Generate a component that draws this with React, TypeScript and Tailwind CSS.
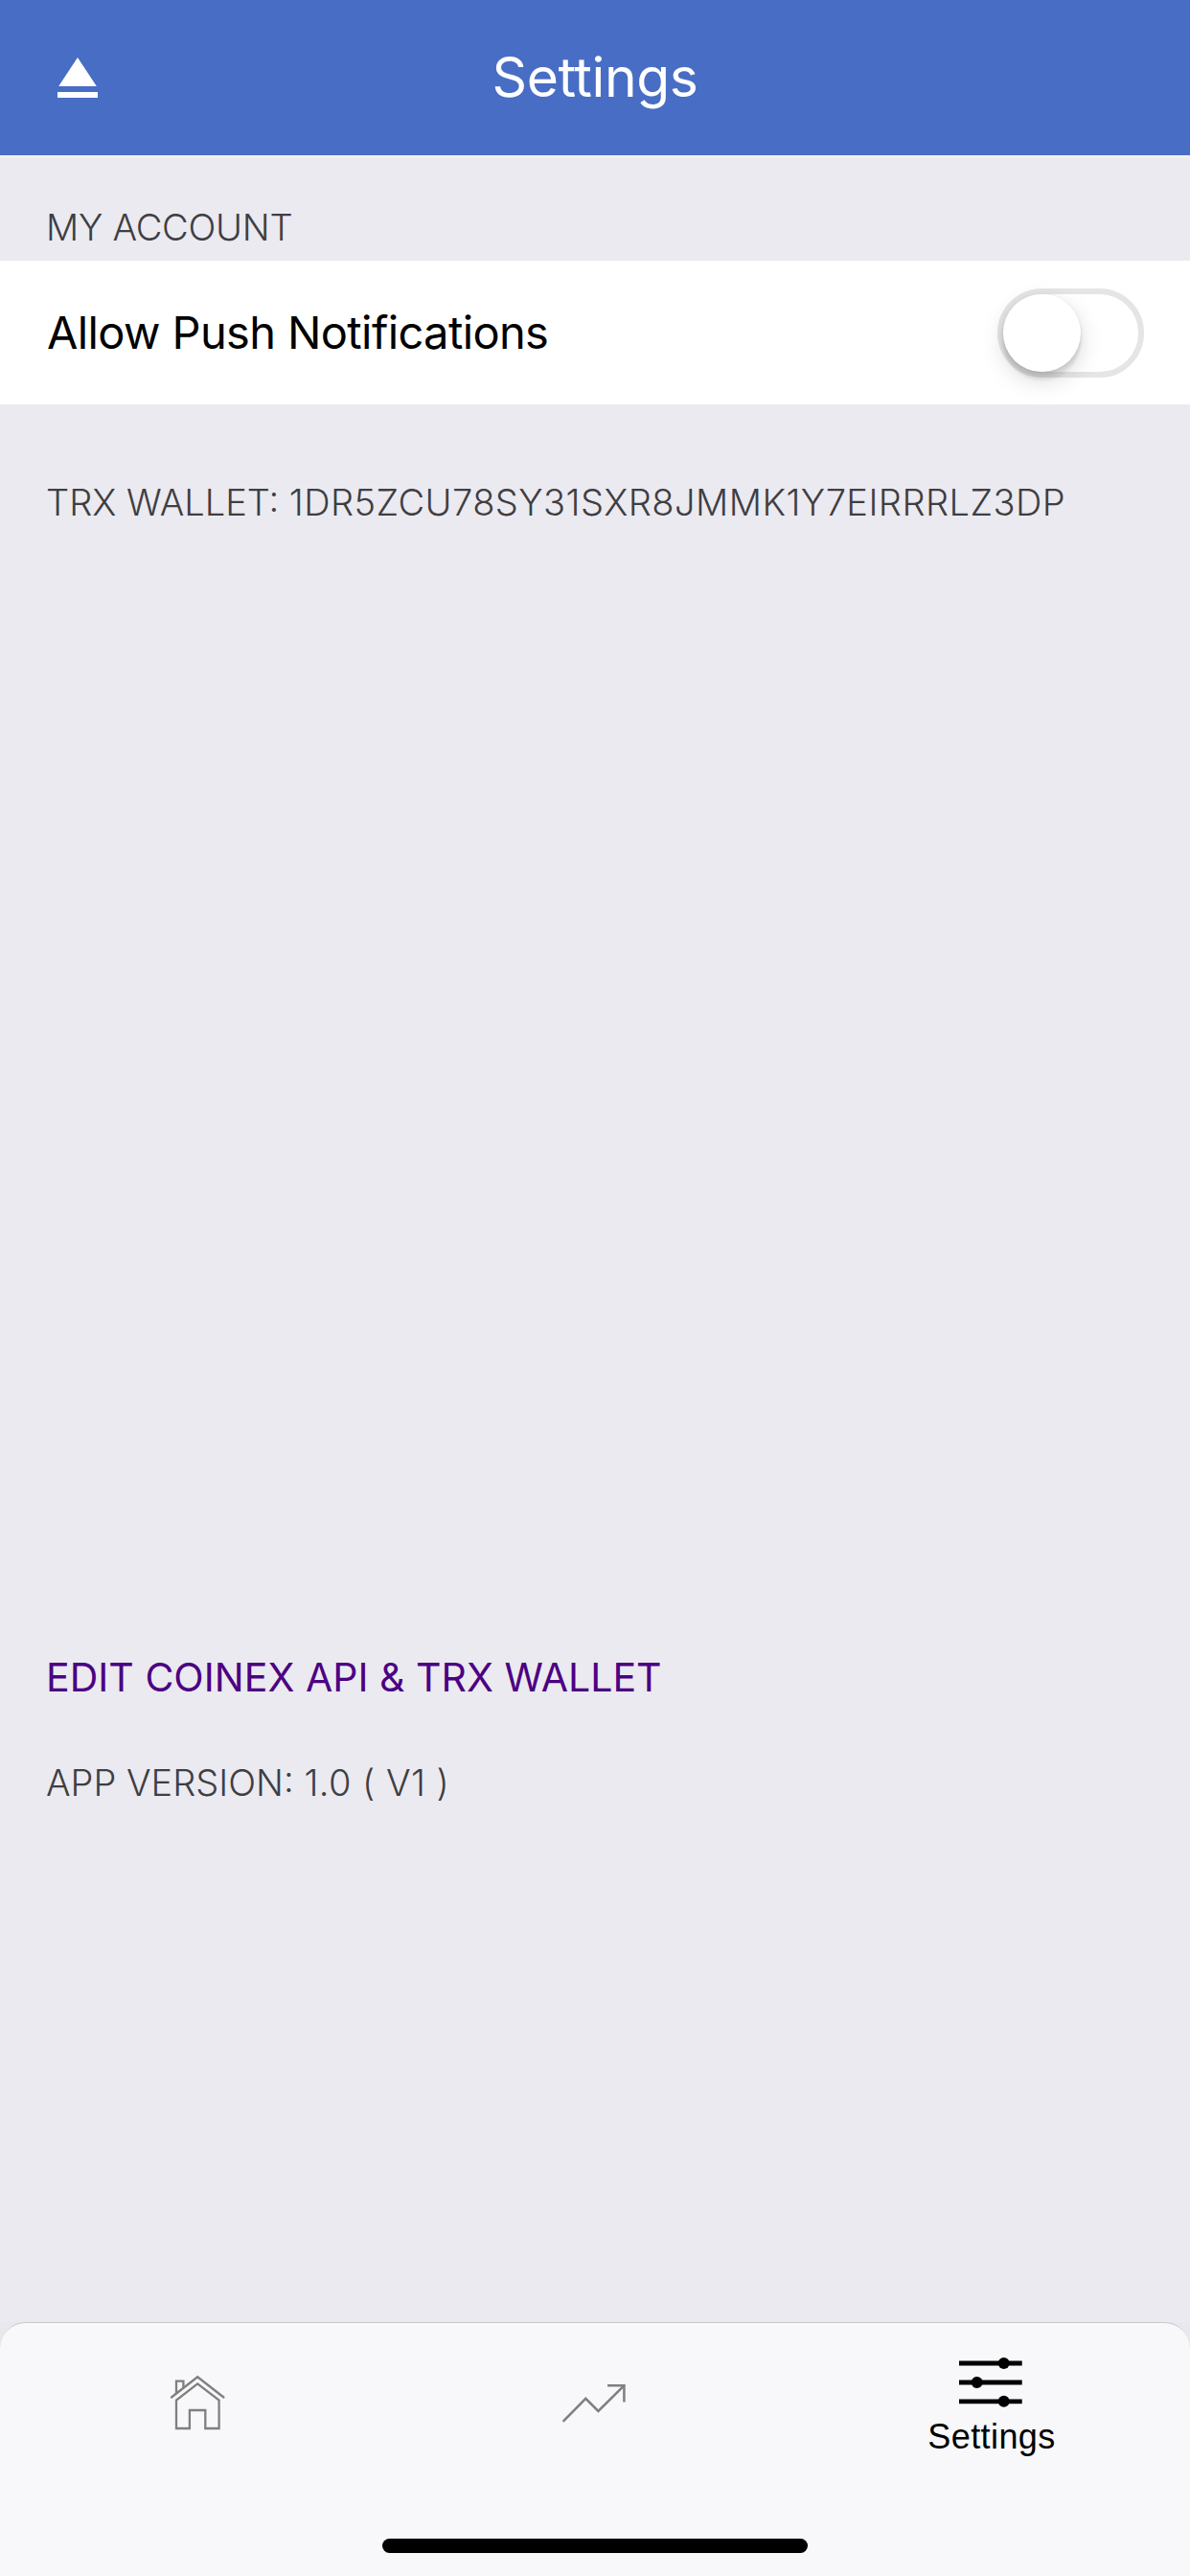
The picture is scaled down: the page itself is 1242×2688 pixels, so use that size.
import type { ReactNode } from 'react';

function EjectIcon() {
  return (
    <svg width="42" height="42" viewBox="0 0 42 42" fill="#fff">
      <path d="M21 0 40.8 30H1.2Z" />
      <path d="M0 36h42v6H0z" />
    </svg>
  );
}

function HomeIcon() {
  return (
    <svg width="72" height="72" viewBox="1 0 72 72" fill="none" stroke="#7f7f7f" strokeWidth="2.3">
      <path d="M9 31.5 36.2 10.3 63.4 31.5" strokeLinecap="round" />
      <path d="M14 27.5V14.6h7.4v6.8" />
      <path d="M14 64V34.6L36.2 17.4 58.6 34.6V64H44.3V45H27.9V64Z" />
    </svg>
  );
}

function TrendIcon() {
  return (
    <svg width="72" height="72" viewBox="0 0 72 72" fill="none" stroke="#7f7f7f" strokeWidth="2.5">
      <path d="M3.3 56.2 26.3 32.8 39.4 46 66.3 19.3" strokeLinecap="round" />
      <path d="M49 19.2H66.4V36.5" />
    </svg>
  );
}

function SlidersIcon() {
  return (
    <svg width="72" height="72" viewBox="0 0 72 72" stroke="#000" strokeWidth="4.8">
      <path d="M2 16H67.7M2 36H67.7M2 55.8H67.7" />
      <g stroke="none">
        <circle cx="48.7" cy="16" r="6" />
        <circle cx="20.7" cy="36" r="6" />
        <circle cx="48.7" cy="55.8" r="6" />
      </g>
    </svg>
  );
}

function Toggle() {
  return (
    <button
      aria-label="Allow Push Notifications"
      className="h-[93px] w-[153px] rounded-full border-[6px] border-[#e5e5e5] bg-white"
    >
      <span className="block size-[81px] rounded-full bg-white shadow-[0_9px_24px_rgba(0,0,0,0.15),0_9px_3px_rgba(0,0,0,0.06),0_2px_5px_rgba(0,0,0,0.12)]" />
    </button>
  );
}

function Caption({ children, className }: { children: ReactNode; className: string }) {
  return (
    <p className={`pl-12 text-[38px] leading-[46px] font-[340] whitespace-nowrap text-[#3f3e43] ${className}`}>
      {children}
    </p>
  );
}

export default function App() {
  return (
    <div className="flex h-[2688px] w-[1242px] flex-col overflow-hidden bg-[#ebeaf0] font-['Inter',sans-serif]">
      <header className="grid h-[165px] grid-cols-[1fr_auto_1fr] items-center border-b-[3px] border-[#f0f0f2] bg-[#486dc4] px-[60px] text-white">
        <EjectIcon />
        <h1 className="text-[57px] leading-[70px] tracking-[-0.4px]">Settings</h1>
      </header>

      <main className="flex flex-1 flex-col">
        <Caption className="pt-[49px] pb-3 tracking-[-0.25px]">MY ACCOUNT</Caption>

        <div className="flex h-[150px] items-center justify-between bg-white pr-12 pl-[49px]">
          <span className="text-[47px] leading-[56px] tracking-[-0.62px] text-black">Allow Push Notifications</span>
          <Toggle />
        </div>

        <Caption className="mt-[79px] tracking-[0.46px]">
          <span className="tracking-[0px]">TRX WALLET: </span>1DR5ZCU78SY31SXR8JMMK1Y7EIRRRLZ3DP
        </Caption>

        <a className="mt-[1178px] pl-12 text-[41px] leading-[50px] tracking-[0.03px] text-[#4b0082]">
          EDIT COINEX API &amp; TRX WALLET
        </a>

        <Caption className="mt-[62px] tracking-[0.45px]">
          <span className="tracking-[0px]">APP VERSION: </span>1.0 ( V1 )
        </Caption>
      </main>

      <footer className="bg-[#e9e8ee]">
        <div className="flex h-[265px] flex-col items-center justify-between rounded-t-[27px] border-t border-[#c8c8cc] bg-[#f8f8fa] pb-6">
          <nav className="grid w-full grid-cols-3 items-start justify-items-center">
            <div className="pt-[46px]">
              <HomeIcon />
            </div>
            <div className="pt-[46px]">
              <TrendIcon />
            </div>
            <div className="flex flex-col items-center pt-[26px]">
              <SlidersIcon />
              <span className="font-['Liberation_Sans',sans-serif] text-[36px] leading-[42px] tracking-[0.4px] text-black">
                Settings
              </span>
            </div>
          </nav>
          <div className="h-[15px] w-[444px] rounded-full bg-black" />
        </div>
      </footer>
    </div>
  );
}
